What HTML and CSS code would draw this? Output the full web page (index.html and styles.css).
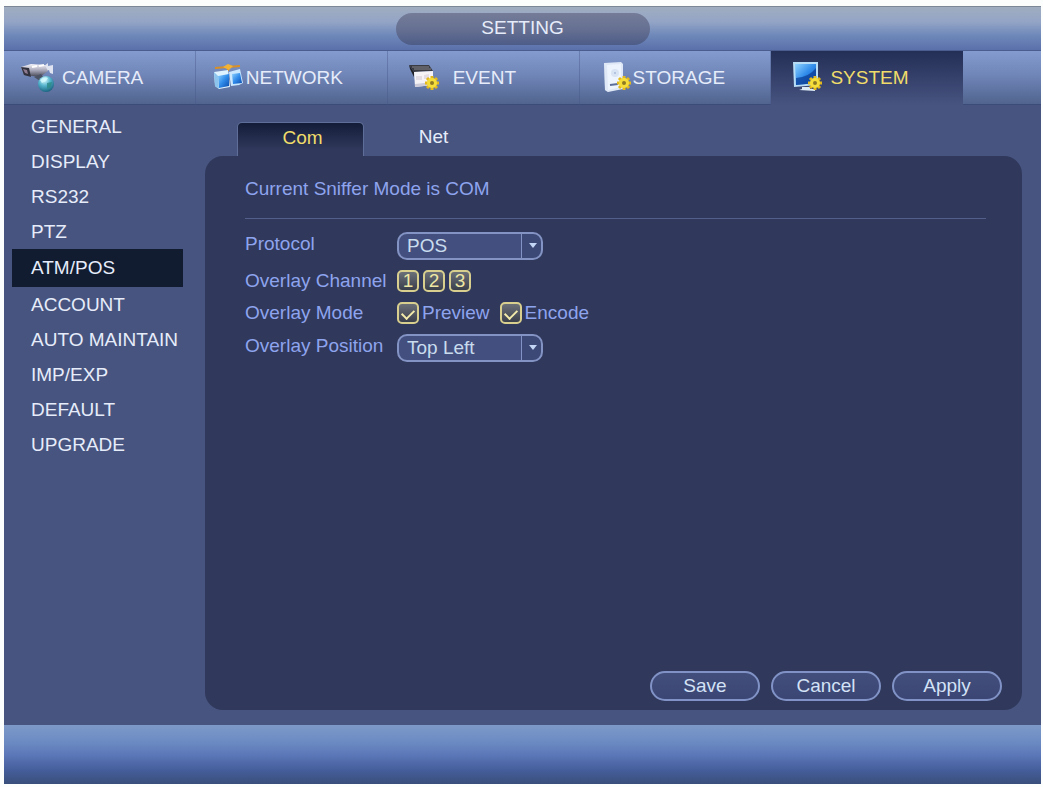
FILE: index.html
```
<!DOCTYPE html>
<html lang="en">
<head>
    <meta charset="UTF-8">
    <meta name="viewport" content="width=device-width, initial-scale=1.0">
    <title>Setting</title>
    <link rel="stylesheet" href="styles.css">
</head>
<body>
    <div class="window">
        <header class="title-bar">
            <h1 class="title">SETTING</h1>
        </header>

        <nav class="main-menu">
            <a class="menu-item" href="#camera">
                <svg width="42" height="34" viewBox="0 0 42 34" aria-hidden="true">
                    <defs>
                        <linearGradient id="metal" x1="0" y1="0" x2="0" y2="1">
                            <stop offset="0" stop-color="#f4f4fa"/>
                            <stop offset="0.5" stop-color="#a5a5b8"/>
                            <stop offset="1" stop-color="#40424f"/>
                        </linearGradient>
                        <radialGradient id="globe" cx="0.4" cy="0.25" r="0.8">
                            <stop offset="0" stop-color="#d8fbff"/>
                            <stop offset="0.45" stop-color="#55b3cc"/>
                            <stop offset="1" stop-color="#145c78"/>
                        </radialGradient>
                    </defs>
                    <path d="M24 5l4-3v3l5-1v9l-3-1-1-3-5 2z" fill="#dfe4f0"/>
                    <path d="M1 6l10-3 14 1 3 6-8 6-16-2z" fill="url(#metal)"/>
                    <path d="M1 6l8 1 2 9-7-2z" fill="#31313d"/>
                    <path d="M3 8l4 1 1 4-3-1z" fill="#8d7a91"/>
                    <path d="M12 6l5-1M19 5l5-1" stroke="#fff" stroke-width="2"/>
                    <path d="M14 16l7-3 3 4-4 3z" fill="#4b5264"/>
                    <circle cx="26" cy="23" r="8" fill="url(#globe)"/>
                    <path d="M20 19q4-4 8-2l-2 3-4 2z" fill="#d5fbff" opacity="0.8"/>
                    <path d="M27 22l5-1-1 5-4 2z" fill="#2d8a87" opacity="0.8"/>
                </svg>
                CAMERA
            </a>
            <a class="menu-item" href="#network">
                <svg width="34" height="34" viewBox="0 0 34 34" aria-hidden="true">
                    <defs>
                        <linearGradient id="screen" x1="0" y1="0" x2="1" y2="1">
                            <stop offset="0" stop-color="#8fd2ff"/>
                            <stop offset="0.5" stop-color="#2f8bea"/>
                            <stop offset="1" stop-color="#0c4cae"/>
                        </linearGradient>
                    </defs>
                    <path d="M3 7l25-2M16 4v6" stroke="#d88f25" stroke-width="2"/>
                    <path d="M11 6l5-3 5 2-4 4z" fill="#f2b334"/>
                    <path d="M17 11l11-3 3 14-4 2-8 1z" fill="#c9e7ff"/>
                    <path d="M20 13l8-1 2 10-9 1z" fill="url(#screen)"/>
                    <path d="M2 11l14-2 2 17-11 2-4-3z" fill="#dff2ff"/>
                    <path d="M6 15l11-2v12l-10 2z" fill="url(#screen)"/>
                    <path d="M2 11l4 4 1 13-4-3z" fill="#8cc4ee"/>
                </svg>
                NETWORK
            </a>
            <a class="menu-item" href="#event">
                <svg width="49" height="34" viewBox="0 0 49 34" aria-hidden="true">
                    <defs>
                        <g id="gear">
                            <g stroke="#e3b91c" stroke-width="3">
                                <path d="M0-7V7M-7 0H7M-5-5L5 5M-5 5L5-5"/>
                            </g>
                            <circle r="5" fill="#f6de3a"/>
                            <circle r="2" fill="#8d7a22"/>
                        </g>
                    </defs>
                    <path d="M5 4h20l4 6-19 1z" fill="#3a3b42"/>
                    <path d="M8 6h17M10 8h17" stroke="#85858c"/>
                    <path d="M5 4l5 7v5l-4-8z" fill="#202126"/>
                    <path d="M10 11l19-1v14l-18 2z" fill="#f5f3f6"/>
                    <path d="M12 15h6v4h-6zM20 14l5-1v5h-5z" fill="#e4dce4"/>
                    <path d="M11 26l18-2v-3l-18 2z" fill="#cdcbd8"/>
                    <use href="#gear" x="28" y="22"/>
                </svg>
                EVENT
            </a>
            <a class="menu-item" href="#storage">
                <svg width="37" height="34" viewBox="0 0 37 34" aria-hidden="true">
                    <path d="M8 2l4 2v27l-3-2z" fill="#a8b5ce"/>
                    <path d="M8 2l17-1 2 2v25l-15 3-3-2z" fill="#dfe8f6"/>
                    <path d="M11 4l14-1v23l-13 3z" fill="#edf4fd"/>
                    <circle cx="19" cy="12" r="4" fill="#d8e3f4"/>
                    <circle cx="19" cy="12" r="1" fill="#a9bbdc"/>
                    <path d="M14 24l8-1" stroke="#5c6f9c" stroke-width="2"/>
                    <use href="#gear" x="28" y="22"/>
                </svg>
                STORAGE
            </a>
            <a class="menu-item active" href="#system">
                <svg width="43" height="34" viewBox="0 0 43 34" aria-hidden="true">
                    <path d="M6 1h25v23l-24 2z" fill="#b7dcf5"/>
                    <path d="M8 3h21v19l-20 2z" fill="url(#screen)"/>
                    <path d="M9 17q13-1 20-10v15l-20 2z" fill="#0b3f97" opacity="0.75"/>
                    <path d="M15 26h8v2h5v2l-16-1 3-1z" fill="#dceaf5"/>
                    <use href="#gear" x="28" y="22"/>
                </svg>
                SYSTEM
            </a>
        </nav>

        <div class="content">
            <nav class="side-menu">
                <a class="side-item" href="#general">GENERAL</a>
                <a class="side-item" href="#display">DISPLAY</a>
                <a class="side-item" href="#rs232">RS232</a>
                <a class="side-item" href="#ptz">PTZ</a>
                <a class="side-item active" href="#atm-pos">ATM/POS</a>
                <a class="side-item" href="#account">ACCOUNT</a>
                <a class="side-item" href="#auto-maintain">AUTO MAINTAIN</a>
                <a class="side-item" href="#imp-exp">IMP/EXP</a>
                <a class="side-item" href="#default">DEFAULT</a>
                <a class="side-item" href="#upgrade">UPGRADE</a>
            </nav>

            <main class="main">
                <div class="tabs">
                    <button type="button" class="tab active">Com</button>
                    <button type="button" class="tab">Net</button>
                </div>

                <form class="panel">
                    <p class="mode-text">Current Sniffer Mode is COM</p>

                    <div class="fields">
                        <label class="field-label" for="protocol">Protocol</label>
                        <div class="select-box">
                            <select id="protocol">
                                <option>POS</option>
                            </select>
                        </div>

                        <span id="channel-label">Overlay Channel</span>
                        <div class="channels" role="group" aria-labelledby="channel-label">
                            <button type="button" class="channel" aria-pressed="true">1</button>
                            <button type="button" class="channel" aria-pressed="true">2</button>
                            <button type="button" class="channel" aria-pressed="true">3</button>
                        </div>

                        <span id="mode-label">Overlay Mode</span>
                        <div class="checks" role="group" aria-labelledby="mode-label">
                            <label class="check"><input type="checkbox" checked>Preview</label>
                            <label class="check"><input type="checkbox" checked>Encode</label>
                        </div>

                        <label class="field-label" for="position">Overlay Position</label>
                        <div class="select-box">
                            <select id="position">
                                <option>Top Left</option>
                            </select>
                        </div>
                    </div>

                    <div class="actions">
                        <button type="button" class="action">Save</button>
                        <button type="button" class="action">Cancel</button>
                        <button type="button" class="action">Apply</button>
                    </div>
                </form>
            </main>
        </div>

        <footer class="bottom-bar"></footer>
    </div>
</body>
</html>
```
FILE: styles.css
```
* {
    padding: 0;
    margin: 0;
    box-sizing: border-box;
}

body {
    min-height: 100vh;
    padding: 6px 2px 3px 4px;
    display: flex;
    background-color: #fcfefe;
    color: #e6ecfa;
    font-family: "Liberation Sans", Arial, sans-serif;
    font-size: 19px;
    line-height: 22px;
}

a {
    color: inherit;
    text-decoration: none;
}

button,
select {
    font: inherit;
    color: inherit;
}

.window {
    flex: 1;
    display: flex;
    flex-direction: column;
    background-color: #46547f;
}

/* title */
.title-bar {
    height: 45px;
    display: flex;
    justify-content: center;
    align-items: center;
    border-top: 1px solid #7c8798;
    border-bottom: 1px solid #4b5c8e;
    background: linear-gradient(#a0adc0, #93a4c6 35%, #6f89ba 65%, #5a70aa);
}

.title {
    width: 254px;
    height: 32px;
    border-radius: 16px;
    background: linear-gradient(#747c98, #667092 50%, #4d5c87);
    font-size: 19px;
    font-weight: normal;
    line-height: 30px;
    text-align: center;
}

/* main menu */
.main-menu {
    height: 54px;
    display: flex;
    border-bottom: 1px solid #3c4c78;
    background: linear-gradient(#839bcf, #7086b8 45%, #51648f);
}

.menu-item {
    width: 18.5%;
    height: 54px;
    padding-left: 16px;
    display: flex;
    align-items: center;
    border-right: 1px solid rgba(70, 86, 135, 0.4);
}

.menu-item.active {
    border-right: 0;
    background: linear-gradient(#242f57, #343f69 45%, #46547f);
    color: #f0dc6a;
}

/* body */
.content {
    flex: 1;
    display: flex;
}

.side-menu {
    width: 201px;
    padding: 4px 22px 4px 8px;
    flex-shrink: 0;
}

.side-item {
    height: 35px;
    padding-left: 19px;
    display: flex;
    align-items: center;
    white-space: nowrap;
}

.side-item.active {
    height: 38px;
    background-color: #121c30;
}

.main {
    flex: 1;
    padding: 17px 19px 15px 0;
    display: flex;
    flex-direction: column;
}

.tabs {
    padding-left: 32px;
    display: flex;
    gap: 4px;
}

.tab {
    width: 127px;
    height: 34px;
    padding: 0 0 4px 4px;
    border: 0;
    background: none;
}

.tab.active {
    border: 1px solid #5f6e98;
    border-bottom: 0;
    border-radius: 5px 5px 0 0;
    background: linear-gradient(#131d39, #30385b 80%);
    color: #f0dc6a;
}

/* panel */
.panel {
    flex: 1;
    padding: 22px 20px 9px 40px;
    display: flex;
    flex-direction: column;
    border-radius: 18px;
    background-color: #30385b;
    color: #8ea4ee;
}

.mode-text {
    margin-right: 16px;
    padding-bottom: 18px;
    border-bottom: 1px solid #535f8a;
}

.fields {
    margin-top: 13px;
    display: grid;
    grid-template-columns: 152px 1fr;
    gap: 10px 0;
    align-items: center;
    justify-items: start;
    white-space: nowrap;
}

.field-label {
    padding-bottom: 4px;
}

.select-box {
    position: relative;
    width: 146px;
    height: 28px;
}

.select-box select {
    width: 100%;
    height: 28px;
    padding-left: 8px;
    appearance: none;
    border: 2px solid #8393c4;
    border-radius: 10px;
    background: linear-gradient(to right, #43507f 124px, #8393c4 124px, #8393c4 125px, #3c4876 125px) border-box;
    color: #c9dcee;
}

.select-box::after {
    content: "";
    position: absolute;
    top: 11px;
    right: 6px;
    border: 4px solid transparent;
    border-top: 5px solid #c3d6f5;
    border-bottom: 0;
    pointer-events: none;
}

.channels {
    display: flex;
    gap: 4px;
}

.channel,
.check input {
    width: 22px;
    height: 22px;
    border: 2px solid #d8cf8f;
    border-radius: 5px;
    background: linear-gradient(#6b6f78, #3a3f4c);
}

.channel {
    color: #eee7a4;
    line-height: 18px;
}

.checks {
    display: flex;
    gap: 10px;
}

.check {
    display: flex;
    align-items: center;
    gap: 3px;
}

.check input {
    padding-top: 3px;
    appearance: none;
    display: flex;
    justify-content: center;
}

.check input:checked::before {
    content: "";
    width: 6px;
    height: 10px;
    border: solid #f3ebaa;
    border-width: 0 2px 2px 0;
    transform: rotate(45deg);
}

.actions {
    margin-top: auto;
    display: flex;
    justify-content: flex-end;
    gap: 11px;
}

.action {
    width: 110px;
    height: 30px;
    border: 2px solid #8193c6;
    border-radius: 15px;
    background: linear-gradient(#424e7c, #3b4675);
    color: #d3e2f6;
}

/* bottom */
.bottom-bar {
    height: 59px;
    background: linear-gradient(#7d99c8, #6e8dc4 25%, #5d78b8 50%, #465f9d 75%, #3a4f7b);
}
```
